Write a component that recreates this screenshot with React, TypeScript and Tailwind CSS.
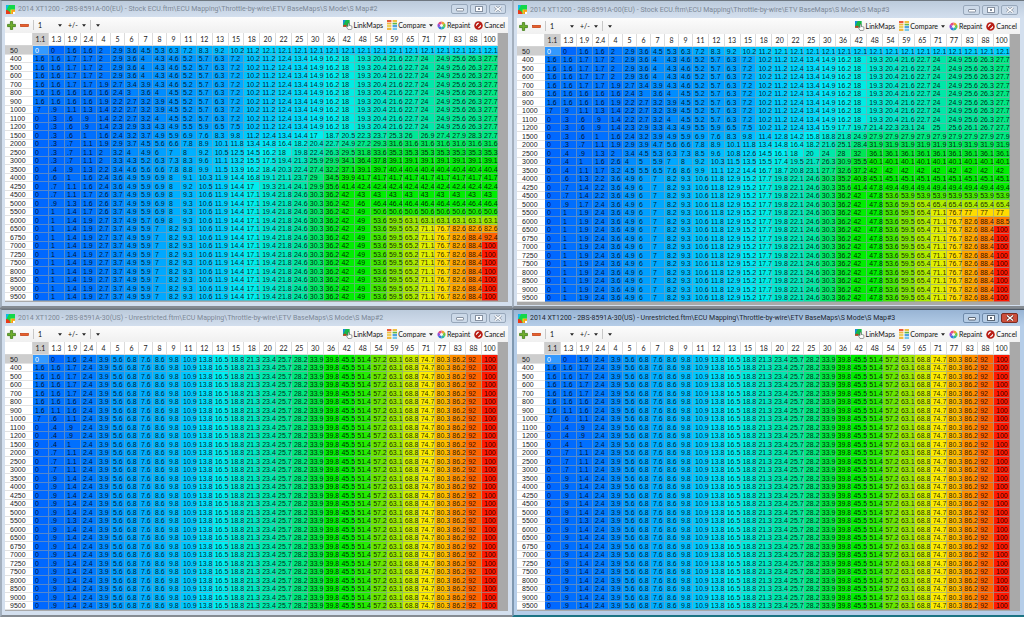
import { ReactNode } from "react";
import clsx from "clsx";

const THROTTLE =
  "1.1 1.3 1.9 2.4 4 5 6 7 8 9 11 12 13 15 18 20 22 25 30 36 42 48 54 59 65 71 77 83 88 100".split(" ");

const RPM =
  "50 400 500 600 700 800 900 1000 1100 1200 1500 2000 2500 3000 3500 4000 4250 4500 5000 5500 6000 6500 6750 7000 7250 7500 8000 8500 9000 9500".split(" ");

// "12.1*15" stands for fifteen equal cells
function expand(row: string): string[] {
  return row.split(" ").flatMap((part) => {
    const [value, times] = part.split("*");
    return Array<string>(times ? Number(times) : 1).fill(value);
  });
}

const IDLE = "0 0 1.6 1.6 2 2.9 3.6 4.5 5.3 6.3 7.2 8.3 9.2 10.2 11.2 12.1*15";
const LOW_END = "11.2 12.4 13.4 14.9 16.2 18 19.3 20.4 21.6 22.7 24 24.9 25.6 26.3 27.7";
const LOW_MID = `5.2 5.7 6.3 7.2 10.2 ${LOW_END}`;

const EU_LOW = [
  IDLE,
  `1.6 1.6 1.7 1.7 2 2.9 3.6 4 4.3 4.6 ${LOW_MID}`,
  `1.6 1.6 1.7 1.7 2 2.9 3.6 4 4.3 4.6 ${LOW_MID}`,
  `1.6 1.6 1.7 1.7 2 2.9 3.6 4 4.3 4.6 ${LOW_MID}`,
  `1.6 1.6 1.7 1.7 1.9 2.7 3.4 3.9 4.3 4.6 ${LOW_MID}`,
  `1.6 1.6 1.6 1.6 1.6 2.4 3 3.6 4 4.5 ${LOW_MID}`,
  `1.6 1.6 1.6 1.6 1.9 2.2 2.7 3.2 3.9 4.5 ${LOW_MID}`,
  `.7 .9 1.1 1.3 1.4 2.2 2.7 3.2 3.9 4.5 ${LOW_MID}`,
  `0 .3 .6 .9 1.4 2.2 2.7 3.2 4 4.5 ${LOW_MID}`,
];

const EU2_MID = "9.3 10.6 11.9 14.4 17.1 19.4 21.8 24.6 30.3 36.2 42";
const EU2_TOP = `0 1 1.4 1.9 2.7 3.7 4.9 5.9 7 8.2 ${EU2_MID} 49 53.6 59.5 65.2 71.1 76.7 82.6`;

const EU_MAP2 = [
  ...EU_LOW,
  `0 .3 .6 .9 1.4 2.3 2.9 3.3 4.3 4.9 5.5 5.9 6.5 7.5 10.2 ${LOW_END}`,
  "0 .3 .6 1 1.6 2.4 3.2 3.7 4.9 5.9 6.9 7.6 8.3 9.8 11.2 12.4 13.4 14.4 17 18.7 20.5 22.3 23.7 25.3 26 26.9 27.4 27.9 28.3 27.7",
  "0 .3 .7 1.1 1.9 2.9 3.7 4.5 5.6 6.6 7.8 8.9 10.1 11.8 13.4 14.8 16.4 18.2 20.4 22.7 24.9 27.2 29.3 31.6*7",
  "0 .3 .7 1.1 2 3.2 4 4.9 6 7 8 9.2 10.5 12.5 14.5 16.2 18 19.8 22.4 26.3 29.5 31.8 33.6 35.3*7",
  "0 .3 .7 1.1 2 3.3 4.3 5.2 6.3 7.3 8.3 9.6 11.1 13.2 15.5 17.5 19.4 21.3 25.9 29.9 34.1 36.4 37.8 39.1*7",
  "0 .4 .9 1.3 2.2 3.4 4.6 5.6 6.6 7.8 8.8 9.9 11.5 13.9 16.2 18.4 20.3 22.4 27.4 32.2 37.1 39.1 39.7 40.4*7",
  "0 .6 1 1.6 2.4 3.6 4.9 5.9 6.9 8 9.1 10.3 11.9 14.4 16.8 19.1 21.1 23.7 29 34.5 39.9 41.7*9",
  "0 .7 1.1 1.6 2.4 3.6 4.9 5.9 6.9 8 9.2 10.5 11.9 14.4 17 19.3 21.4 24.1 29.9 35.6 41.4 42.4*9",
  `0 .7 1.1 1.7 2.6 3.7 4.9 5.9 6.9 8 ${EU2_MID} 43*9`,
  `0 .9 1.3 1.6 2.6 3.7 4.9 5.9 6.9 8 ${EU2_MID} 46 46.4*8`,
  `0 1 1.4 1.7 2.6 3.7 4.9 5.9 6.9 8 ${EU2_MID} 49 50.6*8`,
  `0 1 1.4 1.9 2.7 3.7 4.9 5.7 6.9 8 ${EU2_MID} 49 53.6 59.5 63.1*6`,
  `${EU2_TOP} 82.6 82.6`,
  `${EU2_TOP} 88.4 92.4`,
  ...Array<string>(7).fill(`${EU2_TOP} 88.4 100`),
].map(expand);

const EU3_MID = "3.6 4.9 6 7 8.2 9.3 10.6 11.8 12.9 15.2 17.7 19.8 22.1 24.6 30.3";
const EU3_TOP = `0 1 1.9 2.4 ${EU3_MID} 36.2 42 47.8 53.6 59.5 65.4 71.1 76.7`;

const EU_MAP3 = [
  ...EU_LOW,
  "0 .3 .6 .9 1.4 2.3 2.9 3.3 4.3 4.9 5.5 5.9 6.5 7.5 10.2 11.2 12.4 13.4 15.9 17.7 19.7 21.4 22.3 23.1 24 25 25.6 26.1 26.7 27.7",
  "0 .3 .6 1 1.6 2.4 3.2 3.9 4.9 5.9 6.9 7.6 8.3 9.8 11.4 12.8 14.2 15.8 18.8 21.8 24.9 27.9*9",
  "0 .3 .7 1.1 1.9 2.9 3.9 4.7 5.6 6.6 7.8 8.9 10.1 11.8 13.4 14.8 16.4 18.2 21.6 25.1 28.4 31.9*9",
  "0 .4 .9 1.3 2 3.4 4.5 5.3 6.3 7.3 8.5 9.6 10.8 12.6 14.5 16.1 18 20 24 28 32 36.1*9",
  "0 .4 1 1.6 2.6 4 5 5.9 7 8 9.2 10.3 11.5 13.5 15.5 17.4 19.5 21.7 26.3 30.9 35.5 40.1*9",
  "0 .4 1.1 1.7 3.2 4.5 5.5 6.5 7.6 8.6 9.9 11.1 12.2 14.4 16.7 18.7 20.8 23.1 27.7 32.6 37.2 42*9",
  `0 .6 1.3 2.2 ${EU3_MID} 35.2 40.8 45.1*9`,
  `0 .7 1.4 2.2 ${EU3_MID} 35.6 41.4 47.8 49.4*8`,
  `0 .7 1.4 2.2 ${EU3_MID} 36.2 42 47.8 53.6 53.9*7`,
  `0 .9 1.7 2.4 ${EU3_MID} 36.2 42 47.8 53.6 59.5 65.4*6`,
  `${EU3_TOP} 77*3`,
  `${EU3_TOP} 82.6 88.4 88.5`,
  ...Array<string>(9).fill(`${EU3_TOP} 82.6 88.4 100`),
].map(expand);

const US_TAIL =
  "2.4 3.9 5.6 6.8 7.6 8.6 9.8 10.9 13.8 16.5 18.8 21.3 23.4 25.7 28.2 33.9 39.8 45.5 51.4 57.2 63.1 68.8 74.7 80.3 86.2 92 100";

const US_MAP = [
  "0 0 1.6",
  ...Array<string>(4).fill("1.6 1.6 1.7"),
  "1.6 1.6 1.6",
  "1.6 1.1 1.6",
  ".7 .6 1.1",
  "0 .4 .9",
  "0 .4 .9",
  "0 .4 1",
  ...Array<string>(3).fill("0 .7 1.1"),
  ...Array<string>(5).fill("0 .9 1.4"),
  "0 .9 1.3",
  ...Array<string>(10).fill("0 .9 1.4"),
].map((head) => expand(`${head} ${US_TAIL}`));

type Stop = [number, number, number, number];

const STOPS: Stop[] = [
  [0, 0, 104, 255],
  [2, 0, 120, 255],
  [5, 0, 152, 255],
  [8, 0, 176, 255],
  [12, 0, 208, 255],
  [16, 0, 240, 248],
  [20, 0, 232, 208],
  [28, 0, 232, 128],
  [35, 0, 228, 50],
  [40, 0, 236, 0],
  [49, 0, 240, 0],
  [54, 72, 232, 0],
  [60, 132, 232, 0],
  [66, 176, 236, 0],
  [71, 224, 240, 0],
  [75, 255, 236, 0],
  [78, 255, 212, 0],
  [83, 255, 164, 0],
  [88, 255, 132, 0],
  [93, 255, 92, 0],
  [100, 255, 24, 0],
];

function heat(value: number): string {
  const i = Math.max(1, STOPS.findIndex((s) => s[0] >= value));
  const a = STOPS[i - 1];
  const b = STOPS[i];
  const t = (value - a[0]) / (b[0] - a[0]);
  const mix = (k: number) => Math.round(a[k] + (b[k] - a[k]) * t);
  return `rgb(${mix(1)}, ${mix(2)}, ${mix(3)})`;
}

function AppIcon() {
  return (
    <svg viewBox="0 0 18 18" className="size-[9px] shrink-0">
      <rect width="18" height="18" fill="#12d84a" />
      <path d="M0 0h6L0 12z" fill="#10b8e8" />
      <path d="M9 9h9v9H9z" fill="#f4e020" />
      <path d="M0 10c5 0 8 3 9 8H0z" fill="#e83a18" />
      <path d="M11 10h7v3h-4v5h-3z" fill="#f89820" />
      <path d="M14 14h4v4h-4z" fill="#fff" />
    </svg>
  );
}

function PlusIcon() {
  return (
    <svg viewBox="0 0 16 16" className="size-[9px]">
      <path d="M6 1h4v5h5v4h-5v5H6v-5H1V6h5z" fill="#6fae2c" stroke="#3f7d16" strokeWidth="1.4" />
    </svg>
  );
}

function MinusIcon() {
  return (
    <svg viewBox="0 0 16 16" className="size-[9px]">
      <rect x="1" y="6" width="14" height="4" fill="#e8602c" stroke="#c03c10" strokeWidth="1.2" />
    </svg>
  );
}

function LinkIcon() {
  return (
    <svg viewBox="0 0 18 18" className="size-[10px]">
      <rect width="12" height="12" fill="#18b848" />
      <path d="M0 0h5L0 10z" fill="#1890d8" />
      <path d="M0 12c0-4 5-5 7-1v1z" fill="#c83c20" />
      <path
        d="M9 17l-3-5 1-1 2 1V6h2v4h2l3 1v4l-1 2z"
        fill="#fff"
        stroke="#555"
        strokeWidth="1"
      />
    </svg>
  );
}

function CompareIcon() {
  return (
    <svg viewBox="0 0 18 18" className="size-[10px]">
      <rect width="18" height="18" fill="#fff" />
      <path d="M0 0h8v4H0z" fill="#e85a3c" />
      <path d="M0 5h8v3H0zM0 14h8v4H0z" fill="#f0b840" />
      <path d="M0 9h8v4H0z" fill="#e8d060" />
      <path d="M10 0h8v4h-8z" fill="#f0c040" />
      <path d="M10 5h8v3h-8z" fill="#60b848" />
      <path d="M10 9h8v4h-8z" fill="#50a0e0" />
      <path d="M10 14h8v4h-8z" fill="#78c8e8" />
    </svg>
  );
}

function RepaintIcon() {
  return (
    <svg viewBox="0 0 18 18" className="size-[9px]" fill="none" strokeWidth="5">
      <path d="M9 3.5A5.5 5.5 0 0 1 13.8 6.3" stroke="#f0a030" />
      <path d="M13.8 6.3A5.5 5.5 0 0 1 13.8 11.7" stroke="#70c840" />
      <path d="M13.8 11.7A5.5 5.5 0 0 1 9 14.5" stroke="#28b8a0" />
      <path d="M9 14.5A5.5 5.5 0 0 1 4.2 11.7" stroke="#3078e0" />
      <path d="M4.2 11.7A5.5 5.5 0 0 1 4.2 6.3" stroke="#9050d8" />
      <path d="M4.2 6.3A5.5 5.5 0 0 1 9 3.5" stroke="#e84880" />
    </svg>
  );
}

function CancelIcon() {
  return (
    <svg viewBox="0 0 18 18" className="size-[9px]">
      <circle cx="9" cy="9" r="8.5" fill="#b81c14" />
      <path d="M4 10.5a5.2 5.2 0 0 1 6.5-6.5zM14 7.5a5.2 5.2 0 0 1-6.5 6.5z" fill="#fff" />
    </svg>
  );
}

function Caret() {
  return (
    <svg viewBox="0 0 6 4" className="h-[3px] w-[4px] shrink-0">
      <path d="M0 0h6L3 4z" fill="#222" />
    </svg>
  );
}

interface PickerProps {
  label: string;
  value: string;
  width: string;
}

function Picker({ label, value, width }: PickerProps) {
  return (
    <label className={clsx("flex items-center", width)}>
      <select aria-label={label} className="min-w-0 flex-1 appearance-none bg-transparent leading-[10px]">
        <option>{value}</option>
      </select>
      <Caret />
    </label>
  );
}

interface ToolButtonProps {
  icon: ReactNode;
  children: ReactNode;
}

function ToolButton({ icon, children }: ToolButtonProps) {
  return (
    <button type="button" className="flex items-center gap-px whitespace-nowrap">
      {icon}
      {children}
    </button>
  );
}

function Toolbar() {
  return (
    <div className="flex h-4 items-center bg-linear-to-b from-[#fcfcfc] to-[#f0f0f0] pr-[3px] pl-[2px] text-[7px] leading-[10px] text-[#111]">
      <button type="button" aria-label="Increase">
        <PlusIcon />
      </button>
      <button type="button" aria-label="Decrease" className="ml-1">
        <MinusIcon />
      </button>
      <span className="mx-1 h-2.5 w-px bg-[#c8c8c8]" />
      <Picker label="Step" value="1" width="w-[24px]" />
      <span className="w-[6px]" />
      <Picker label="Operation" value="+/-" width="w-[18px]" />
      <span className="mx-1 h-2.5 w-px bg-[#c8c8c8]" />
      <button type="button" aria-label="More" className="px-px">
        <Caret />
      </button>
      <div className="ml-auto flex items-center gap-1">
        <ToolButton icon={<LinkIcon />}>LinkMaps</ToolButton>
        <ToolButton icon={<CompareIcon />}>
          Compare
          <span className="ml-[2px]">
            <Caret />
          </span>
        </ToolButton>
        <ToolButton icon={<RepaintIcon />}>Repaint</ToolButton>
        <ToolButton icon={<CancelIcon />}>Cancel</ToolButton>
      </div>
    </div>
  );
}

function WindowButtons({ active }: { active: boolean }) {
  const base = "flex h-[10px] w-[17px] items-center justify-center rounded-[2px] border";
  const plain = active
    ? "border-[#6f8bab] bg-[#b4cbe4] text-[#5a6674]"
    : "border-[#98a8bb] bg-[#ccd9e8] text-[#8590a0]";
  return (
    <div className="flex gap-[2px]">
      <button type="button" aria-label="Minimize" className={clsx(base, plain)}>
        <svg viewBox="0 0 8 6" className="h-[6px] w-[8px]">
          <rect x="0.5" y="2.5" width="7" height="2.5" rx="0.5" fill="#fff" stroke="currentColor" />
        </svg>
      </button>
      <button type="button" aria-label="Maximize" className={clsx(base, plain)}>
        <svg viewBox="0 0 8 6" className="h-[6px] w-[8px]">
          <rect x="0.5" y="0.5" width="7" height="5" fill="#fff" stroke="currentColor" />
          <rect x="3" y="2" width="2" height="2" fill="currentColor" />
        </svg>
      </button>
      <button
        type="button"
        aria-label="Close"
        className={clsx(base, active ? "border-[#7c2c22] bg-[#cc4f3c] text-[#5a2a24]" : plain)}
      >
        <svg viewBox="0 0 8 6" className="h-[6px] w-[8px]" fill="none">
          <path d="M1 0.5l6 5M7 0.5l-6 5" stroke="currentColor" strokeWidth="2.6" />
          <path d="M1 0.5l6 5M7 0.5l-6 5" stroke="#fff" strokeWidth="1.4" />
        </svg>
      </button>
    </div>
  );
}

function MapTable({ rows }: { rows: string[][] }) {
  return (
    <table className="w-full table-fixed border-separate border-spacing-0 bg-white text-left font-['Liberation_Sans',sans-serif] text-[7px] leading-[7px] whitespace-nowrap">
      <colgroup>
        <col className="w-[28px]" />
        {THROTTLE.map((t, i) => (
          <col key={t} className={clsx(i < 4 && "w-[16px]", i >= 4 && i < 10 && "w-[14px]")} />
        ))}
      </colgroup>
      <thead>
        <tr className="h-[13px] font-['Lato',sans-serif] text-[#222]">
          <td className="border-r border-b border-[#d4d4d4] p-0" />
          {THROTTLE.map((t, i) => (
            <th
              key={t}
              scope="col"
              className={clsx(
                "border-r border-b border-[#dcdcdc] p-0 text-center font-normal",
                i === 0 && "bg-[#cdcdcd]",
              )}
            >
              {t}
            </th>
          ))}
        </tr>
      </thead>
      <tbody>
        {rows.map((cells, r) => (
          <tr key={RPM[r]} className="odd:h-[9px] even:h-[8px]">
            <th
              scope="row"
              className={clsx(
                "border-b border-[#e2e2e2] p-0 pl-[5px] font-normal text-[#1a1a1a]",
                r === 0 && "bg-[#cdcdcd]",
              )}
            >
              {RPM[r]}
            </th>
            {cells.map((cell, c) => {
              const selected = r === 0 && c === 0;
              return (
                <td
                  key={c}
                  className={clsx(
                    "border-r border-b border-[#8f9fa8]/60 p-0 pl-[2px]",
                    selected ? "text-white" : "text-black/85",
                  )}
                  style={{ backgroundColor: selected ? "#3399ff" : heat(Number(cell)) }}
                >
                  {cell}
                </td>
              );
            })}
          </tr>
        ))}
      </tbody>
    </table>
  );
}

interface MapWindowProps {
  title: string;
  rows: string[][];
  active?: boolean;
  roomy?: boolean;
}

function MapWindow({ title, rows, active = false, roomy = false }: MapWindowProps) {
  return (
    <section
      className={clsx(
        "flex min-w-0 flex-col border-t border-b-2 border-l-2 pr-[4px] pl-[3px]",
        active
          ? "border-t-[#4c5866] border-b-[#1c7484] border-l-[#8098b0] bg-[#b5cde8]"
          : "border-t-[#6e7780] border-b-[#858b92] border-l-[#a4b0be] bg-[#d3dfee]",
      )}
    >
      <header
        className={clsx(
          "-mr-[4px] -ml-[3px] flex items-center gap-[3px] bg-linear-to-b pr-[6px] pl-[4px]",
          roomy ? "h-[17px]" : "h-4",
          active ? "from-[#98b4d4] to-[#b5cde8]" : "from-[#bccbdc] to-[#d3dfee]",
        )}
      >
        <AppIcon />
        <h2
          className={clsx(
            "min-w-0 flex-1 truncate font-['Roboto',sans-serif] text-[7px] leading-[10px]",
            active ? "text-[#1c2630]" : "text-[#7c8896]",
          )}
        >
          {title}
        </h2>
        <WindowButtons active={active} />
      </header>
      <Toolbar />
      <div className={clsx("flex-1 bg-[#a9a9a9] pr-[10px]", roomy ? "pb-[3px]" : "pb-px")}>
        <MapTable rows={rows} />
      </div>
      <div className={roomy ? "h-px" : "h-1"} />
    </section>
  );
}

const BASE = "Mapping\\Throttle-by-wire\\ETV BaseMaps\\S Mode\\S Map";

export default function App() {
  return (
    <main className="grid min-h-screen grid-cols-2 content-start gap-y-px bg-[#7b8188] font-['Lato',sans-serif]">
      <MapWindow title={`2014 XT1200 - 2BS-8591A-00(EU) - Stock ECU.ftm\\ECU ${BASE}#2`} rows={EU_MAP2} />
      <MapWindow title={`2014 XT1200 - 2BS-8591A-00(EU) - Stock ECU.ftm\\ECU ${BASE}#3`} rows={EU_MAP3} roomy />
      <MapWindow title={`2014 XT1200 - 2BS-8591A-30(US) - Unrestricted.ftm\\ECU ${BASE}#2`} rows={US_MAP} />
      <MapWindow title={`2014 XT1200 - 2BS-8591A-30(US) - Unrestricted.ftm\\ECU ${BASE}#3`} rows={US_MAP} active />
    </main>
  );
}
